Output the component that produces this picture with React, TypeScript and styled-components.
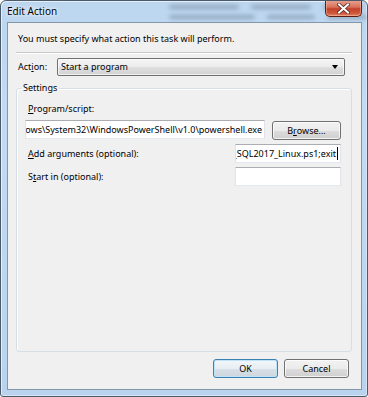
import React from "react";
import styled, { createGlobalStyle } from "styled-components";

const GlobalStyle = createGlobalStyle`
  html, body {
    margin: 0;
    padding: 0;
    background: #ffffff;
  }
  * {
    box-sizing: border-box;
  }
  body {
    font-family: "Noto Sans", "Liberation Sans", sans-serif;
    font-size: 9px;
    color: #000;
  }
`;

const Window = styled.div`
  position: relative;
  width: 368px;
  height: 397px;
  display: flex;
  flex-direction: column;
  padding: 0 5px 6px 6px;
  border: 1px solid #4c5b6c;
  border-radius: 6px 6px 3px 3px;
  background: linear-gradient(180deg, #bcd6ef 0%, #c3dbf2 30%, #b9d3ee 100%);
  box-shadow: inset 1px 1px 0 #e4effa, inset -1px -1px 0 #d6e6f6;
  overflow: hidden;
`;

const Ghost = styled.div`
  position: absolute;
  top: 0;
  left: 150px;
  width: 220px;
  height: 22px;
  pointer-events: none;
  span {
    position: absolute;
    height: 4px;
    background: #5d6f84;
    opacity: 0.45;
    filter: blur(2px);
    border-radius: 2px;
  }
`;

const TitleBar = styled.div`
  position: relative;
  height: 21px;
  display: flex;
  align-items: flex-start;
`;

const Title = styled.div`
  line-height: 21px;
  font-size: 10px;
  color: #000;
  text-shadow: 0 0 6px #ffffff, 0 0 3px #ffffff;
`;

const CloseButton = styled.div`
  margin-left: auto;
  margin-top: -1px;
  width: 37px;
  height: 17px;
  display: flex;
  align-items: center;
  justify-content: center;
  border: 1px solid #5c1e14;
  border-top: none;
  border-radius: 0 0 5px 5px;
  background: linear-gradient(180deg, #e8a594 0%, #d9705a 45%, #c3402a 55%, #d05c3e 85%, #e6896c 100%);
  box-shadow: inset 0 0 0 1px rgba(255, 200, 180, 0.45);
`;

const Client = styled.div`
  flex: 1;
  display: flex;
  flex-direction: column;
  background: #f0f0f0;
  border: 1px solid #8496aa;
`;

const Intro = styled.div`
  padding: 9px 0 0 10px;
  line-height: 14px;
`;

const Separator = styled.div`
  margin: 6px 9px 0 8px;
  height: 2px;
  border-top: 1px solid #c9c9c9;
  border-bottom: 1px solid #ffffff;
`;

const ActionRow = styled.div`
  display: flex;
  align-items: center;
  margin: 4px 16px 0 10px;
  height: 18px;
`;

const Label = styled.span`
  line-height: 14px;
  white-space: nowrap;
  u {
    text-decoration: underline;
    text-underline-offset: 1px;
  }
`;

const ActionLabel = styled(Label)`
  width: 39px;
`;

const Combo = styled.div`
  flex: 1;
  height: 18px;
  display: flex;
  align-items: center;
  padding: 0 6px 0 3px;
  border: 1px solid #707070;
  border-radius: 2px;
  background: linear-gradient(180deg, #f4f4f4 0%, #ececec 50%, #dfdfdf 51%, #d2d2d2 100%);
  box-shadow: inset 0 0 0 1px rgba(255, 255, 255, 0.7);
`;

const ComboText = styled.span`
  flex: 1;
  line-height: 14px;
`;

const Arrow = styled.span`
  width: 0;
  height: 0;
  border-left: 3px solid transparent;
  border-right: 3px solid transparent;
  border-top: 4px solid #000;
`;

const Group = styled.fieldset`
  margin: 5px 9px 0 8px;
  padding: 0 0 0 0;
  height: 271px;
  border: 1px solid #d5dfe5;
  border-radius: 3px;
  box-shadow: inset 1px 1px 0 #ffffff;
  min-width: 0;
`;

const Legend = styled.legend`
  margin-left: 4px;
  padding: 0 2px;
  line-height: 14px;
`;

const GroupBody = styled.div`
  display: flex;
  flex-direction: column;
  padding: 7px 10px 0 8px;
`;

const FieldLabel = styled(Label)`
  padding-left: 3px;
`;

const ProgramRow = styled.div`
  display: flex;
  align-items: flex-start;
  gap: 7px;
  margin-top: 4px;
`;

const TextBox = styled.div<{ $width: number }>`
  width: ${({ $width }) => $width}px;
  height: 19px;
  display: flex;
  align-items: center;
  justify-content: flex-end;
  overflow: hidden;
  padding: 0 2px;
  background: #ffffff;
  border: 1px solid #e2e3ea;
  border-top-color: #abadb3;
  border-bottom-color: #e3e9ef;
  white-space: nowrap;
  line-height: 14px;
`;

const Caret = styled.span`
  display: inline-block;
  width: 1px;
  height: 13px;
  margin-left: 1px;
  background: #000;
  flex: none;
`;

const Button = styled.div<{ $default?: boolean }>`
  width: ${({ $default }) => ($default ? 65 : 65)}px;
  height: 19px;
  display: flex;
  align-items: center;
  justify-content: center;
  line-height: 14px;
  border: 1px solid ${({ $default }) => ($default ? "#3c7fb1" : "#707070")};
  border-radius: 3px;
  background: ${({ $default }) =>
    $default
      ? "linear-gradient(180deg, #f2f7fa 0%, #e8eef2 50%, #d8e1e7 51%, #ccd6dc 100%)"
      : "linear-gradient(180deg, #f2f2f2 0%, #ebebeb 50%, #dddddd 51%, #cfcfcf 100%)"};
  box-shadow: ${({ $default }) =>
    $default ? "inset 0 0 0 1px #bfe3f8" : "inset 0 0 0 1px rgba(255,255,255,0.75)"};
  u {
    text-decoration: underline;
    text-underline-offset: 1px;
  }
`;

const BrowseButton = styled(Button)`
  width: 69px;
  margin-top: 1px;
`;

const ArgRow = styled.div`
  display: flex;
  align-items: center;
  justify-content: space-between;
  margin-top: 4px;
`;

const Footer = styled.div`
  display: flex;
  justify-content: flex-end;
  gap: 6px;
  margin: 7px 12px 0 0;
`;

const CloseGlyph: React.FC = () => (
  <svg width="13" height="11" viewBox="0 0 13 11">
    <path
      d="M2 1.5 L11 9.5 M11 1.5 L2 9.5"
      stroke="#5a2a22"
      strokeWidth="3.6"
      strokeLinecap="square"
      fill="none"
    />
    <path
      d="M2 1.5 L11 9.5 M11 1.5 L2 9.5"
      stroke="#ffffff"
      strokeWidth="2"
      strokeLinecap="square"
      fill="none"
    />
  </svg>
);

const App: React.FC = () => {
  return (
    <>
      <GlobalStyle />
      <Window>
        <Ghost>
          <span style={{ left: 18, top: 4, width: 70 }} />
          <span style={{ left: 100, top: 4, width: 60 }} />
          <span style={{ left: 172, top: 4, width: 40 }} />
          <span style={{ left: 18, top: 14, width: 86 }} />
          <span style={{ left: 116, top: 14, width: 48 }} />
          <span style={{ left: 176, top: 14, width: 40 }} />
        </Ghost>
        <TitleBar>
          <Title>Edit Action</Title>
          <CloseButton>
            <CloseGlyph />
          </CloseButton>
        </TitleBar>
        <Client>
          <Intro>You must specify what action this task will perform.</Intro>
          <Separator />
          <ActionRow>
            <ActionLabel>
              Act<u>i</u>on:
            </ActionLabel>
            <Combo>
              <ComboText>Start a program</ComboText>
              <Arrow />
            </Combo>
          </ActionRow>
          <Group>
            <Legend>Settings</Legend>
            <GroupBody>
              <FieldLabel>
                <u>P</u>rogram/script:
              </FieldLabel>
              <ProgramRow>
                <TextBox $width={240}>
                  C:\Windows\System32\WindowsPowerShell\v1.0\powershell.exe
                </TextBox>
                <BrowseButton>
                  B<u>r</u>owse...
                </BrowseButton>
              </ProgramRow>
              <ArgRow>
                <FieldLabel>
                  <u>A</u>dd arguments (optional):
                </FieldLabel>
                <TextBox $width={106}>
                  -File C:\Scripts\Backup_SQL2017_Linux.ps1;exit
                  <Caret />
                </TextBox>
              </ArgRow>
              <ArgRow>
                <FieldLabel>
                  S<u>t</u>art in (optional):
                </FieldLabel>
                <TextBox $width={106} />
              </ArgRow>
            </GroupBody>
          </Group>
          <Footer>
            <Button $default>OK</Button>
            <Button>Cancel</Button>
          </Footer>
        </Client>
      </Window>
    </>
  );
};

export default App;
